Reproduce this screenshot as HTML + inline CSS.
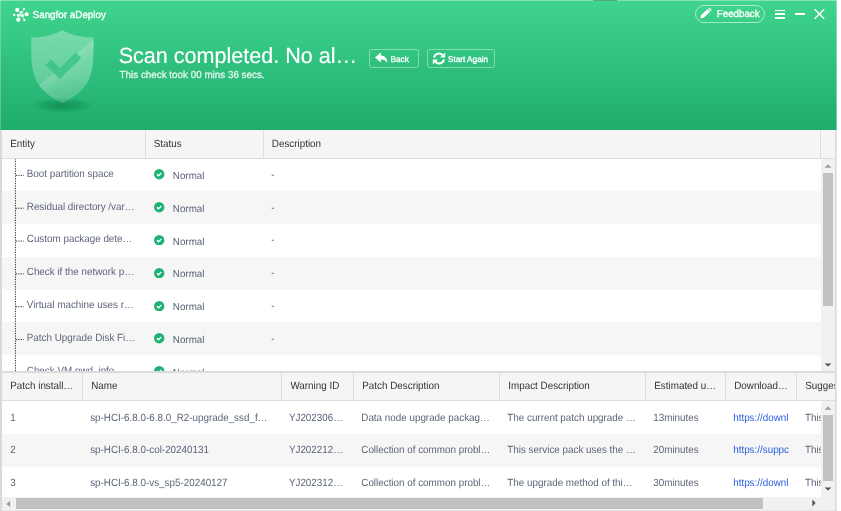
<!DOCTYPE html>
<html><head><meta charset="utf-8">
<style>
html,body{margin:0;padding:0;background:#fff;}
body{text-rendering:geometricPrecision;width:841px;height:511px;overflow:hidden;position:relative;font-family:"Liberation Sans",Arial,sans-serif;font-size:9.85px;color:#5b6478;}
#win{position:absolute;left:0;top:0;width:837px;height:511px;background:#fff;overflow:hidden;}
#hdr{position:absolute;left:0;top:0;width:837px;height:129.8px;background:linear-gradient(to bottom,#40d48e 0%,#1eac6d 100%);}
#hdr .topline{position:absolute;left:0;top:0;width:100%;height:1px;background:rgba(255,255,255,.35);}
#hdr .leftline{position:absolute;left:0;top:0;width:1.2px;height:100%;background:rgba(255,255,255,.25);}
.abs{position:absolute;white-space:nowrap;}
.w{color:#fff;-webkit-text-stroke:0.3px #fff;transform:scaleY(1.03);transform-origin:0 78%;}
.w.big{-webkit-text-stroke:0.15px #fff;transform:scaleY(1.02);}
.btn{position:absolute;border:1px solid rgba(255,255,255,.4);border-radius:2.5px;box-sizing:border-box;}
/* tables */
.thead{position:absolute;left:0;background:#f5f5f5;}
.cb{position:absolute;width:1px;background:#dcdcdc;}
.hl{position:absolute;height:1px;background:#dcdcdc;z-index:2;}
.th{position:absolute;color:#333;white-space:nowrap;transform:scaleY(1.06);transform-origin:0 78%;}
.row{position:absolute;left:1.6px;}
.g{background:#f6f6f6;}
.td{position:absolute;white-space:nowrap;overflow:hidden;transform:scaleY(1.06);transform-origin:0 78%;}
.lk{color:#2a5de0;text-decoration:none;}
</style></head><body>
<div id="win">
 <div id="hdr">
  <div class="topline"></div><div class="abs" style="left:593px;top:0;width:24px;height:1px;background:#55a583"></div><div class="leftline"></div>
  <!-- logo -->
  <svg class="abs" style="left:8px;top:4px" width="26" height="22" viewBox="0 0 26 22">
   <g stroke="#fff" stroke-width="0.7" stroke-opacity=".75">
    <line x1="12.9" y1="10.8" x2="9.3" y2="5.8"/><line x1="12.9" y1="10.8" x2="16" y2="4.9"/><line x1="12.9" y1="10.8" x2="18.6" y2="10.3"/><line x1="12.9" y1="10.8" x2="16.4" y2="16"/><line x1="12.9" y1="10.8" x2="10.3" y2="15.7"/><line x1="12.9" y1="10.8" x2="6" y2="11"/>
   </g>
   <g fill="#fff">
    <circle cx="9.26" cy="5.8" r="2.1"/><circle cx="16" cy="4.95" r="1.05"/><circle cx="18.6" cy="10.3" r="2"/><circle cx="16.4" cy="16" r="1.15"/><circle cx="10.3" cy="15.7" r="2.1"/><circle cx="6" cy="11" r="1.15"/>
    <circle cx="13.3" cy="8.4" r="1.45" fill-opacity=".92"/><circle cx="10.5" cy="11.5" r="1.45" fill-opacity=".92"/><circle cx="14.6" cy="12" r="1.45" fill-opacity=".92"/>
   </g>
  </svg>
  <div class="abs w" style="left:32.6px;top:10.3px;font-size:9.85px;line-height:12px;">Sangfor aDeploy</div>
  <!-- feedback -->
  <div class="btn" style="left:695px;top:5.1px;width:70px;height:18px;border-radius:9px;border-color:rgba(255,255,255,.55)"></div>
  <svg class="abs" style="left:700px;top:8px" width="12" height="11" viewBox="0 0 12 11"><path d="M0.3 10.4 L1 7.2 L7.6 0.9 L10.4 3.5 L3.6 9.8 Z M8.4 0.4 L9.4 -0.3 L11.8 2 L11 3 Z" fill="#fff"/></svg>
  <div class="abs w" style="left:716.8px;top:8.6px;font-size:9.75px;line-height:12px;">Feedback</div>
  <!-- hamburger -->
  <div class="abs" style="left:774.8px;top:9.6px;width:10.5px;height:1.5px;background:#fff"></div>
  <div class="abs" style="left:774.8px;top:13.4px;width:10.5px;height:1.5px;background:#fff"></div>
  <div class="abs" style="left:774.8px;top:17.2px;width:10.5px;height:1.5px;background:#fff"></div>
  <!-- min -->
  <div class="abs" style="left:794.9px;top:13px;width:10px;height:1.5px;background:#fff"></div>
  <!-- close -->
  <svg class="abs" style="left:813px;top:8px" width="13" height="13" viewBox="0 0 13 13"><path d="M1.6 1.2 L11.2 10.8 M11.2 1.2 L1.6 10.8" stroke="#fff" stroke-width="1.45" fill="none"/></svg>

  <!-- shield -->
  <svg class="abs" style="left:20px;top:24px" width="90" height="100" viewBox="0 0 90 100">
   <defs>
    <linearGradient id="sv" x1="0" y1="0" x2="0" y2="1">
      <stop offset="0" stop-color="#fff" stop-opacity=".30"/>
      <stop offset=".6" stop-color="#fff" stop-opacity=".26"/>
      <stop offset="1" stop-color="#fff" stop-opacity=".14"/>
    </linearGradient>
    <linearGradient id="sg" gradientUnits="userSpaceOnUse" x1="22.4" y1="7" x2="74.1" y2="68.2">
      <stop offset="0" stop-color="#fff" stop-opacity=".03"/>
      <stop offset=".48" stop-color="#fff" stop-opacity=".02"/>
      <stop offset=".505" stop-color="#fff" stop-opacity=".2"/>
      <stop offset=".62" stop-color="#fff" stop-opacity=".1"/>
      <stop offset="1" stop-color="#fff" stop-opacity="0"/>
    </linearGradient>
    <radialGradient id="sh" cx=".5" cy=".5" r=".5"><stop offset="0" stop-color="#0a8048" stop-opacity=".65"/><stop offset=".5" stop-color="#0a8048" stop-opacity=".4"/><stop offset="1" stop-color="#0c8a50" stop-opacity="0"/></radialGradient>
    <filter id="bl" x="-10%" y="-10%" width="120%" height="120%"><feGaussianBlur stdDeviation="0.5"/></filter>
   </defs>
   <ellipse cx="42.4" cy="81.5" rx="33" ry="8" fill="url(#sh)"/>
   <g filter="url(#bl)">
   <path id="shp" d="M42.4 6 C36 10.5 22 14 11.4 13.2 C10.7 35 11.7 50 18.2 60 C24.2 69 34 75.5 42.4 79 C50.8 75.5 60.6 69 66.6 60 C73.1 50 74.1 35 73.4 13.2 C62.8 14 48.8 10.5 42.4 6 Z" fill="url(#sv)"/>
   <path d="M42.4 6 C36 10.5 22 14 11.4 13.2 C10.7 35 11.7 50 18.2 60 C24.2 69 34 75.5 42.4 79 C50.8 75.5 60.6 69 66.6 60 C73.1 50 74.1 35 73.4 13.2 C62.8 14 48.8 10.5 42.4 6 Z" fill="url(#sg)"/>
   <path d="M25.6 41 L31 35.6 L39.8 44 L55.8 28.6 L61.4 34 L39.8 55 Z" fill="#35c283" fill-opacity=".8"/>
   </g>
  </svg>

  <div class="abs w big" style="left:118.7px;top:43px;font-size:21.55px;line-height:26px;">Scan completed. No al…</div>
  <div class="abs w" style="left:119.6px;top:70.2px;font-size:9.85px;line-height:12px;opacity:.85">This check took 00 mins 36 secs.</div>

  <div class="btn" style="left:369px;top:49px;width:50px;height:19px;"></div>
  <svg class="abs" style="left:374px;top:52px" width="14" height="12" viewBox="0 0 14 12"><path d="M6.9 0.6 L0.9 5.5 L6.9 10.4 L6.9 7.4 C9.8 7.2 11.8 8.2 13.2 11 C13.4 6.4 10.9 3.8 6.9 3.6 Z" fill="#fff"/></svg>
  <div class="abs w" style="left:390.6px;top:55px;font-size:8.2px;line-height:10px;">Back</div>

  <div class="btn" style="left:427px;top:49px;width:67.5px;height:19px;"></div>
  <svg class="abs" style="left:431.5px;top:51.5px" width="14" height="13" viewBox="0 0 14 13"><g fill="none" stroke="#fff" stroke-width="2.1"><path d="M2 5.6 A5 5 0 0 1 10.6 3.2"/><path d="M12 7.4 A5 5 0 0 1 3.4 9.8"/></g><path d="M13.2 0.4 L13.2 5.6 L8 5.6 Z M0.8 12.6 L0.8 7.4 L6 7.4 Z" fill="#fff"/></svg>
  <div class="abs w" style="left:448px;top:55px;font-size:8.2px;line-height:10px;">Start Again</div>
 </div>

 <!-- side borders -->
 <div class="abs" style="left:0;top:129.8px;width:1.6px;height:382px;background:#d9d9d9"></div>
 <div class="abs" style="left:835.1px;top:129.8px;width:1.6px;height:382px;background:#d9d9d9"></div>

 <!-- table 1 -->
 <div class="thead" style="left:1.6px;top:129.8px;width:833.5px;height:28.5px;"></div>
 <div class="hl" style="left:1.6px;top:158px;width:833.5px;"></div>
 <div class="cb" style="left:145px;top:129.8px;height:28px"></div>
 <div class="cb" style="left:263.1px;top:129.8px;height:28px"></div>
 <div class="cb" style="left:820px;top:129.8px;height:28px"></div>
 <div class="th" style="left:10.2px;top:138.6px;line-height:12px">Entity</div>
 <div class="th" style="left:153.8px;top:138.6px;line-height:12px">Status</div>
 <div class="th" style="left:271.8px;top:138.6px;line-height:12px">Description</div>

 <div id="t1body" class="abs" style="left:1.6px;top:158.3px;width:819.2px;height:213px;overflow:hidden">
<div class="row" style="left:0;top:0.00px;width:819.2px;height:32.83px"></div>
<div class="row g" style="left:0;top:32.83px;width:819.2px;height:32.83px"></div>
<div class="row" style="left:0;top:65.66px;width:819.2px;height:32.83px"></div>
<div class="row g" style="left:0;top:98.49px;width:819.2px;height:32.83px"></div>
<div class="row" style="left:0;top:131.32px;width:819.2px;height:32.83px"></div>
<div class="row g" style="left:0;top:164.15px;width:819.2px;height:32.83px"></div>
<div class="row" style="left:0;top:196.98px;width:819.2px;height:32.83px"></div>
<svg class="abs" style="left:0;top:0" width="30" height="213" viewBox="0 0 30 213"><g stroke="#111" stroke-width="0.85" stroke-dasharray="1.25 1.21" fill="none"><line x1="13.45" y1="0.3" x2="13.45" y2="213"/><line x1="13.9" y1="17.40" x2="21.9" y2="17.40"/><line x1="13.9" y1="50.23" x2="21.9" y2="50.23"/><line x1="13.9" y1="83.06" x2="21.9" y2="83.06"/><line x1="13.9" y1="115.89" x2="21.9" y2="115.89"/><line x1="13.9" y1="148.72" x2="21.9" y2="148.72"/><line x1="13.9" y1="181.55" x2="21.9" y2="181.55"/><line x1="13.9" y1="214.38" x2="21.9" y2="214.38"/></g></svg>
<div class="td" style="left:25.2px;top:10.50px;line-height:12px">Boot partition space</div>
<svg class="abs" style="left:152.6px;top:11.00px" width="10.4" height="10.4" viewBox="0 0 20 20"><circle cx="10" cy="10" r="10" fill="#1db274"/><path d="M5.6 10 L8.7 13 L14.2 7.5" stroke="#fff" stroke-width="2.7" fill="none"/></svg>
<div class="td" style="left:171.2px;top:12.65px;line-height:12px;transform:scaleY(1.02)">Normal</div>
<div class="td" style="left:269.7px;top:11.40px;line-height:12px">-</div>
<div class="td" style="left:25.2px;top:43.33px;line-height:12px">Residual directory /var…</div>
<svg class="abs" style="left:152.6px;top:43.83px" width="10.4" height="10.4" viewBox="0 0 20 20"><circle cx="10" cy="10" r="10" fill="#1db274"/><path d="M5.6 10 L8.7 13 L14.2 7.5" stroke="#fff" stroke-width="2.7" fill="none"/></svg>
<div class="td" style="left:171.2px;top:45.48px;line-height:12px;transform:scaleY(1.02)">Normal</div>
<div class="td" style="left:269.7px;top:44.23px;line-height:12px">-</div>
<div class="td" style="left:25.2px;top:76.16px;line-height:12px">Custom package dete…</div>
<svg class="abs" style="left:152.6px;top:76.66px" width="10.4" height="10.4" viewBox="0 0 20 20"><circle cx="10" cy="10" r="10" fill="#1db274"/><path d="M5.6 10 L8.7 13 L14.2 7.5" stroke="#fff" stroke-width="2.7" fill="none"/></svg>
<div class="td" style="left:171.2px;top:78.31px;line-height:12px;transform:scaleY(1.02)">Normal</div>
<div class="td" style="left:269.7px;top:77.06px;line-height:12px">-</div>
<div class="td" style="left:25.2px;top:108.99px;line-height:12px">Check if the network p…</div>
<svg class="abs" style="left:152.6px;top:109.49px" width="10.4" height="10.4" viewBox="0 0 20 20"><circle cx="10" cy="10" r="10" fill="#1db274"/><path d="M5.6 10 L8.7 13 L14.2 7.5" stroke="#fff" stroke-width="2.7" fill="none"/></svg>
<div class="td" style="left:171.2px;top:111.14px;line-height:12px;transform:scaleY(1.02)">Normal</div>
<div class="td" style="left:269.7px;top:109.89px;line-height:12px">-</div>
<div class="td" style="left:25.2px;top:141.82px;line-height:12px">Virtual machine uses r…</div>
<svg class="abs" style="left:152.6px;top:142.32px" width="10.4" height="10.4" viewBox="0 0 20 20"><circle cx="10" cy="10" r="10" fill="#1db274"/><path d="M5.6 10 L8.7 13 L14.2 7.5" stroke="#fff" stroke-width="2.7" fill="none"/></svg>
<div class="td" style="left:171.2px;top:143.97px;line-height:12px;transform:scaleY(1.02)">Normal</div>
<div class="td" style="left:269.7px;top:142.72px;line-height:12px">-</div>
<div class="td" style="left:25.2px;top:174.65px;line-height:12px">Patch Upgrade Disk Fi…</div>
<svg class="abs" style="left:152.6px;top:175.15px" width="10.4" height="10.4" viewBox="0 0 20 20"><circle cx="10" cy="10" r="10" fill="#1db274"/><path d="M5.6 10 L8.7 13 L14.2 7.5" stroke="#fff" stroke-width="2.7" fill="none"/></svg>
<div class="td" style="left:171.2px;top:176.80px;line-height:12px;transform:scaleY(1.02)">Normal</div>
<div class="td" style="left:269.7px;top:175.55px;line-height:12px">-</div>
<div class="td" style="left:25.2px;top:207.48px;line-height:12px">Check VM pwd_info</div>
<svg class="abs" style="left:152.6px;top:207.98px" width="10.4" height="10.4" viewBox="0 0 20 20"><circle cx="10" cy="10" r="10" fill="#1db274"/><path d="M5.6 10 L8.7 13 L14.2 7.5" stroke="#fff" stroke-width="2.7" fill="none"/></svg>
<div class="td" style="left:171.2px;top:209.63px;line-height:12px;transform:scaleY(1.02)">Normal</div>
<div class="td" style="left:269.7px;top:208.38px;line-height:12px">-</div>
 </div>
 <!-- scrollbar 1 -->
 <div class="abs" style="left:820.9px;top:158.3px;width:14.2px;height:213px;background:#f1f1f1"></div>
 <div class="abs" style="left:822.8px;top:173px;width:10.4px;height:132.8px;background:#c1c1c1"></div>
 <svg class="abs" style="left:823px;top:162px" width="10" height="8" viewBox="0 0 10 8"><path d="M1.5 5.8 L5 2.3 L8.5 5.8 Z" fill="#9d9d9d"/></svg>
 <svg class="abs" style="left:823px;top:360.5px" width="10" height="8" viewBox="0 0 10 8"><path d="M1.6 2.4 L5 5.6 L8.4 2.4 Z" fill="#505050"/></svg>

 <!-- table 2 -->
 <div class="abs" style="left:0;top:371.2px;width:836.7px;height:1.4px;background:#dcdcdc"></div>
 <div class="thead" style="left:1.6px;top:372.6px;width:833.5px;height:27.6px;"></div>
 <div class="hl" style="left:1.6px;top:400px;width:833.5px;"></div>
<!--H2-->
<div class="th" style="left:10.3px;top:381.0px;width:72.1px;overflow:hidden;line-height:12px">Patch install…</div>
<div class="th" style="left:91.2px;top:381.0px;width:190.4px;overflow:hidden;line-height:12px">Name</div>
<div class="cb" style="left:81.9px;top:372.6px;height:27.2px"></div>
<div class="th" style="left:290.4px;top:381.0px;width:63.1px;overflow:hidden;line-height:12px">Warning ID</div>
<div class="cb" style="left:281.1px;top:372.6px;height:27.2px"></div>
<div class="th" style="left:362.3px;top:381.0px;width:137.2px;overflow:hidden;line-height:12px">Patch Description</div>
<div class="cb" style="left:353.0px;top:372.6px;height:27.2px"></div>
<div class="th" style="left:508.3px;top:381.0px;width:137.2px;overflow:hidden;line-height:12px">Impact Description</div>
<div class="cb" style="left:499.0px;top:372.6px;height:27.2px"></div>
<div class="th" style="left:654.3px;top:381.0px;width:71.1px;overflow:hidden;line-height:12px">Estimated u…</div>
<div class="cb" style="left:645.0px;top:372.6px;height:27.2px"></div>
<div class="th" style="left:734.2px;top:381.0px;width:62.3px;overflow:hidden;line-height:12px">Download…</div>
<div class="cb" style="left:724.9px;top:372.6px;height:27.2px"></div>
<div class="th" style="left:805.3px;top:381.0px;width:29.8px;overflow:hidden;line-height:12px">Sugges</div>
<div class="cb" style="left:796.0px;top:372.6px;height:27.2px"></div>
<!--/H2-->
 <div id="t2body" class="abs" style="left:1.6px;top:400.2px;width:819.6px;height:96.4px;overflow:hidden">
<div class="row" style="left:0;top:0.00px;width:819.6px;height:33.3px"></div>
<div class="td" style="left:8.6px;top:12.90px;width:71.8px;line-height:12px">1</div>
<div class="td" style="left:88.6px;top:12.90px;width:190.2px;line-height:12px">sp-HCI-6.8.0-6.8.0_R2-upgrade_ssd_f…</div>
<div class="td" style="left:287.3px;top:12.90px;width:62.9px;line-height:12px">YJ202306…</div>
<div class="td" style="left:359.7px;top:12.90px;width:137.0px;line-height:12px">Data node upgrade packag…</div>
<div class="td" style="left:505.7px;top:12.90px;width:137.0px;line-height:12px">The current patch upgrade …</div>
<div class="td" style="left:651.7px;top:12.90px;width:70.9px;line-height:12px">13minutes</div>
<div class="td" style="left:731.6px;top:12.90px;width:62.1px;line-height:12px"><span class="lk">https://downl</span></div>
<div class="td" style="left:803.3px;top:12.90px;width:64.5px;line-height:12px">This</div>
<div class="row g" style="left:0;top:33.60px;width:819.6px;height:33.3px"></div>
<div class="td" style="left:8.6px;top:45.20px;width:71.8px;line-height:12px">2</div>
<div class="td" style="left:88.6px;top:45.20px;width:190.2px;line-height:12px">sp-HCI-6.8.0-col-20240131</div>
<div class="td" style="left:287.3px;top:45.20px;width:62.9px;line-height:12px">YJ202212…</div>
<div class="td" style="left:359.7px;top:45.20px;width:137.0px;line-height:12px">Collection of common probl…</div>
<div class="td" style="left:505.7px;top:45.20px;width:137.0px;line-height:12px">This service pack uses the …</div>
<div class="td" style="left:651.7px;top:45.20px;width:70.9px;line-height:12px">20minutes</div>
<div class="td" style="left:731.6px;top:45.20px;width:62.1px;line-height:12px"><span class="lk">https://suppc</span></div>
<div class="td" style="left:803.3px;top:45.20px;width:64.5px;line-height:12px">This</div>
<div class="row" style="left:0;top:66.50px;width:819.6px;height:33.3px"></div>
<div class="td" style="left:8.6px;top:78.20px;width:71.8px;line-height:12px">3</div>
<div class="td" style="left:88.6px;top:78.20px;width:190.2px;line-height:12px">sp-HCI-6.8.0-vs_sp5-20240127</div>
<div class="td" style="left:287.3px;top:78.20px;width:62.9px;line-height:12px">YJ202312…</div>
<div class="td" style="left:359.7px;top:78.20px;width:137.0px;line-height:12px">Collection of common probl…</div>
<div class="td" style="left:505.7px;top:78.20px;width:137.0px;line-height:12px">The upgrade method of thi…</div>
<div class="td" style="left:651.7px;top:78.20px;width:70.9px;line-height:12px">30minutes</div>
<div class="td" style="left:731.6px;top:78.20px;width:62.1px;line-height:12px"><span class="lk">https://downl</span></div>
<div class="td" style="left:803.3px;top:78.20px;width:64.5px;line-height:12px">This</div>
</div>
 <!-- scrollbars 2 -->
 <div class="abs" style="left:821.2px;top:400.2px;width:13.9px;height:110.8px;background:#f1f1f1"></div>
 <div class="abs" style="left:823.3px;top:415.1px;width:9.8px;height:65.7px;background:#c1c1c1"></div>
 <svg class="abs" style="left:823px;top:404.4px" width="10" height="8" viewBox="0 0 10 8"><path d="M1.5 5.8 L5 2.3 L8.5 5.8 Z" fill="#9d9d9d"/></svg>
 <svg class="abs" style="left:823px;top:485.3px" width="10" height="8" viewBox="0 0 10 8"><path d="M1.6 2.4 L5 5.6 L8.4 2.4 Z" fill="#505050"/></svg>
 <div class="abs" style="left:1.6px;top:496.6px;width:819.6px;height:14.4px;background:#f1f1f1"></div>
 <div class="abs" style="left:15.9px;top:498px;width:747px;height:10.6px;background:#c1c1c1"></div>
 <svg class="abs" style="left:4px;top:499px" width="8" height="10" viewBox="0 0 8 10"><path d="M6.1 1.7 L2.4 4.9 L6.1 8.1 Z" fill="#979797"/></svg>
 <svg class="abs" style="left:809.5px;top:498.3px" width="8" height="10" viewBox="0 0 8 10"><path d="M2.4 1.6 L5.6 5 L2.4 8.4 Z" fill="#505050"/></svg>
<div class="abs" style="left:1.6px;top:510px;width:833.5px;height:1px;background:#e6e6e6"></div>
<div class="abs" style="left:836px;top:0;width:1px;height:511px;background:rgba(255,255,255,.36);z-index:5"></div>
</div>
</body></html>
